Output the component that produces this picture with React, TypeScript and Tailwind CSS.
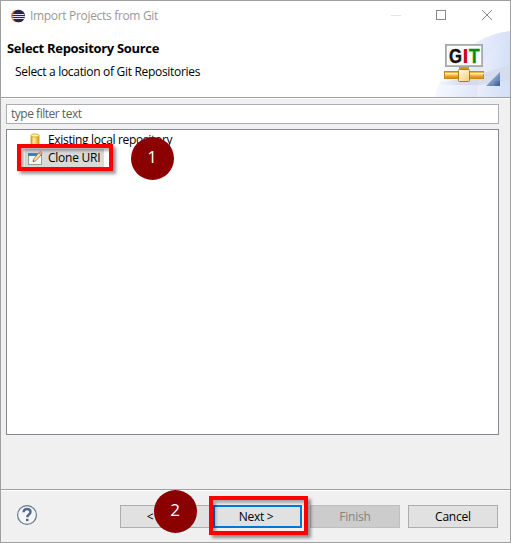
import React from 'react';

function EclipseLogo() {
  return (
    <svg className="h-4 w-4 shrink-0" viewBox="0 0 16 16">
      <circle cx="7.3" cy="8" r="6.3" fill="#f7941e" />
      <circle cx="8.7" cy="8" r="6.3" fill="#2c2255" />
      <path d="M2.8 6.5h11.7M2.4 8.5h12.5M2.8 10.5h11.7" stroke="#e4e2ee" strokeWidth="1" />
    </svg>
  );
}

function WizardBanner() {
  return (
    <svg className="h-[66px] w-[75px] shrink-0" viewBox="435 31 75 66">
      <defs>
        <linearGradient id="arc" x1="0" y1="0" x2="1" y2="0.3">
          <stop offset="0" stopColor="#fdfeff" />
          <stop offset=".4" stopColor="#f0f4fd" />
          <stop offset="1" stopColor="#d3def6" />
        </linearGradient>
        <linearGradient id="arcOuter" x1="0" y1="0" x2="1" y2="0">
          <stop offset="0" stopColor="#f3f6fe" />
          <stop offset="1" stopColor="#d6e0f7" />
        </linearGradient>
        <linearGradient id="pipe" x1="0" y1="0" x2="0" y2="1">
          <stop offset="0" stopColor="#d9941a" />
          <stop offset=".35" stopColor="#ffe08a" />
          <stop offset=".65" stopColor="#eba92d" />
          <stop offset="1" stopColor="#c98208" />
        </linearGradient>
        <linearGradient id="hub" x1="0" y1="0" x2="1" y2="1">
          <stop offset="0" stopColor="#fffdf0" />
          <stop offset="1" stopColor="#f5cc70" />
        </linearGradient>
        <linearGradient id="corner" x1="0" y1="0" x2="1" y2="1">
          <stop offset="0.3" stopColor="#a9bcdc" />
          <stop offset="1" stopColor="#2f5898" />
        </linearGradient>
        <linearGradient id="shade" x1="0" y1="0" x2="1" y2="0">
          <stop offset="0" stopColor="#c4c9d4" stopOpacity="0" />
          <stop offset=".35" stopColor="#c4c9d4" stopOpacity=".5" />
          <stop offset="1" stopColor="#d3d9e6" stopOpacity=".5" />
        </linearGradient>
      </defs>
      <path d="M435 97C441 67 474 34 510 31V97Z" fill="url(#arc)" />
      <path d="M477 97C478 64 489 44 510 36V97Z" fill="url(#arcOuter)" opacity=".5" />
      <path d="M437 83L470 77L510 65V80L480 85L438 85Z" fill="url(#shade)" />
      <rect x="445.9" y="44.9" width="36.2" height="21.2" fill="#fbfcfb" stroke="#a3aaab" strokeWidth="1.8" />
      <rect x="459" y="67" width="10" height="4" fill="#d99622" />
      <rect x="444.5" y="71.5" width="39" height="7" fill="url(#pipe)" stroke="#c88a20" />
      <path d="M445 73.5H484" stroke="#fff0b5" />
      <rect x="458.5" y="69.5" width="11" height="12" rx="1" fill="url(#hub)" stroke="#b57b1b" />
      <g fontFamily="'Liberation Sans', sans-serif" fontSize="19.5" fontWeight="700">
        <text x="449" y="62.5" fill="#111" stroke="#111" strokeWidth=".35" textLength="13" lengthAdjust="spacingAndGlyphs">G</text>
        <text x="462.6" y="62.5" fill="#d00018" textLength="6" lengthAdjust="spacingAndGlyphs">I</text>
        <text x="468.7" y="62.5" fill="#078c18" stroke="#078c18" strokeWidth=".3" textLength="11" lengthAdjust="spacingAndGlyphs">T</text>
      </g>
      <path d="M500 72V86H486Z" fill="url(#corner)" />
      <path d="M493 79V86M493 80H500" stroke="#8aa3cb" strokeWidth=".6" />
    </svg>
  );
}

function DatabaseIcon() {
  return (
    <svg className="h-4 w-4 shrink-0" viewBox="0 0 16 16">
      <defs>
        <linearGradient id="cylinder" x1="0" x2="1">
          <stop offset="0" stopColor="#d9a514" />
          <stop offset=".35" stopColor="#fff0a0" />
          <stop offset="1" stopColor="#d89e0c" />
        </linearGradient>
      </defs>
      <path d="M4 3.5v10c0 2 8 2 8 0v-10Z" fill="url(#cylinder)" stroke="#c8920a" strokeWidth=".8" />
      <ellipse cx="8" cy="3.5" rx="4" ry="1.6" fill="#fff3b0" stroke="#cfa022" strokeWidth=".8" />
    </svg>
  );
}

function CloneIcon() {
  return (
    <svg className="h-4 w-4 shrink-0" viewBox="0 0 16 16">
      <rect x="1.5" y="3.5" width="13" height="11" fill="#eef7ff" stroke="#9a9c8c" />
      <path d="M1 3h14v3H1Z" fill="#3d7fc6" />
      <path d="M6 11.6 6.8 8.8 12 2.6 14.4 4.5 8.8 10.9Z" fill="#f6dba0" stroke="#a67a45" strokeWidth=".8" />
      <path d="m11.8 2.8 1.4-1.6 2.3 1.9-1.3 1.7Z" fill="#e5a794" stroke="#b9735f" strokeWidth=".5" />
      <path d="m5.8 11.9.5-1.6 1.1 1Z" fill="#333" />
    </svg>
  );
}

function HelpIcon() {
  return (
    <svg className="-mt-px h-[22px] w-[22px]" viewBox="0 0 22 22">
      <circle cx="11" cy="11" r="9.4" fill="#f4f5f7" stroke="#64788f" strokeWidth="1.2" />
      <path d="M7.6 8.3C7.7 5.8 9 5 11 5c2.1 0 3.5 1.1 3.5 2.9 0 2.7-3.2 2.6-3.2 5.3" fill="none" stroke="#52698a" strokeWidth="2.4" />
      <rect x="10" y="14.8" width="2.5" height="2.3" fill="#52698a" />
    </svg>
  );
}

const button = 'flex h-[23px] w-[90px] items-center justify-center border border-[#adadad] bg-[#e1e1e1] whitespace-nowrap';

export default function App() {
  return (
    <div className="relative flex h-[543px] w-[511px] flex-col overflow-hidden border border-[#a0a0a0] bg-[#f0f0f0] font-['Open_Sans','Noto_Sans',sans-serif] text-[12px] leading-4 text-black">
      <header className="flex h-[30px] shrink-0 items-center bg-white pl-[9px] text-[#999]">
        <EclipseLogo />
        <span className="ml-[4px] whitespace-nowrap tracking-[-0.32px]">Import Projects from Git</span>
        <svg className="ml-auto h-[30px] w-[120px]" viewBox="390 1 120 30" fill="none">
          <path d="M391 15.5h10" stroke="#e5e5e5" />
          <rect x="436.5" y="10.5" width="9" height="9" stroke="#888" />
          <path d="m482 10 10 10m0-10-10 10" stroke="#888" />
        </svg>
      </header>
      <section className="flex h-[67px] shrink-0 justify-between border-b border-[#a0a0a0] bg-white">
        <div className="pt-[9px] pl-[6px] whitespace-nowrap">
          <h1 className="text-[13px] font-bold tracking-[-0.31px]">Select Repository Source</h1>
          <p className="mt-[8px] ml-[8px] tracking-[-0.31px]">Select a location of Git Repositories</p>
        </div>
        <WizardBanner />
      </section>
      <main className="flex flex-1 flex-col border-t border-white px-[5px] pt-[5px]">
        <div className="flex h-[20px] w-[493px] items-center border border-[#a9adb5] bg-white pl-[4px] text-[#606060]">
          <span className="tracking-[-0.48px]">type filter text</span>
        </div>
        <div className="mt-[5px] h-[306px] w-[493px] border border-[#828790] bg-white pt-px pl-[21px]">
          <div className="-ml-px flex h-[18px] items-center">
            <DatabaseIcon />
            <span className="ml-[5px] tracking-[-0.32px]">Existing local repository</span>
          </div>
          <div className="-ml-[3px] flex h-[18px] w-[79px] items-center bg-[#d9d9d9] pl-[2px] whitespace-nowrap">
            <CloneIcon />
            <span className="ml-[5px] tracking-[-0.25px]">Clone URI</span>
          </div>
        </div>
      </main>
      <footer className="flex h-[53px] shrink-0 border-t border-[#a0a0a0]">
        <div className="flex w-full border-t border-white pt-[14px] pl-[15px]">
          <HelpIcon />
          <div className="ml-[82px] flex">
            <button className={button}>&lt; Back</button>
            <button className="ml-[3px] flex h-[23px] w-[89px] items-center justify-center border-2 border-[#0078d7] bg-[#e1e1e1] pr-[3px] tracking-[-0.3px]">Next &gt;</button>
            <button className="ml-[8px] flex h-[23px] w-[90px] items-center justify-center border border-[#bfbfbf] bg-[#ccc] text-[#838383] tracking-[-0.2px]">Finish</button>
            <button className="ml-[8px] flex h-[23px] w-[90px] items-center justify-center border border-[#adadad] bg-[#e1e1e1] tracking-[-0.2px]">Cancel</button>
          </div>
        </div>
      </footer>
      <div className="absolute top-[143px] left-[16px] h-[27px] w-[96px] border-4 border-[#fe0000] shadow-[3px_3px_3px_rgba(0,0,0,0.4),inset_3px_3px_3px_rgba(0,0,0,0.3)]" />
      <div className="absolute top-[495px] left-[208px] h-[39px] w-[99px] border-4 border-[#fe0000] shadow-[3px_3px_3px_rgba(0,0,0,0.4),inset_3px_3px_3px_rgba(0,0,0,0.3)]" />
      <div className="absolute top-[136px] left-[130px] flex h-[43px] w-[43px] items-center justify-center rounded-full bg-[#8b0000] pr-px pb-[4px] text-[17px] text-white">1</div>
      <div className="absolute top-[489px] left-[153px] flex h-[43px] w-[43px] items-center justify-center rounded-full bg-[#8b0000] pr-px pb-[4px] text-[17px] text-white">2</div>
    </div>
  );
}
